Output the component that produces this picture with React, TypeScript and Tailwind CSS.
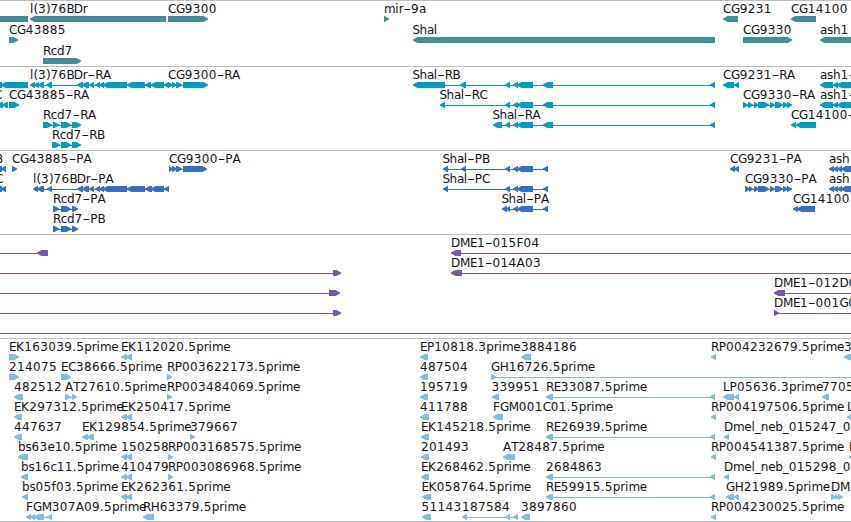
import React from "react";

type Span = [number, number];
type Feature = {
  label?: string;
  x: number;
  dir: "l" | "r";
  segs: Span[];
  line?: Span;
};
type Track = { name: string; color: string; pitch: number; height: number; rows: Feature[][] };

const f = (label: string, x: number, dir: "l" | "r", segs: Span[], line?: Span): Feature => ({
  label,
  x,
  dir,
  segs,
  line,
});

const shalTail: Span[] = [[505, 510], [513, 518], [517, 533], [543, 553], [710, 715]];
const shalCds: Span[] = [[505, 510], [513, 518], [517, 533], [543, 548]];
const pair: Span[] = [[121, 127], [126, 132]];

const genes: Track = {
  name: "Genes",
  color: "#3f8f94",
  pitch: 21,
  height: 66,
  rows: [
    [
      f("", -10, "l", [[-10, 28]]),
      f("l(3)76BDr", 30, "l", [[30, 166]]),
      f("CG9300", 168, "r", [[168, 208]]),
      f("mir-9a", 384, "r", [[384, 389]]),
      f("CG9231", 723, "l", [[723, 738]]),
      f("CG14100", 791, "l", [[791, 816]]),
    ],
    [
      f("CG43885", 9, "r", [[9, 18]]),
      f("Shal", 412.5, "l", [[413, 715]]),
      f("CG9330", 743, "r", [[743, 792]]),
      f("ash1", 820, "l", [[820, 860]]),
    ],
    [f("Rcd7", 43, "r", [[43, 81]])],
  ],
};

const transcripts: Track = {
  name: "Transcripts",
  color: "#009ebf",
  pitch: 20,
  height: 84,
  rows: [
    [
      f("", -6, "l", [[-6, 2], [1, 28]]),
      f("l(3)76BDr-RA", 30, "l", [[30, 35], [34, 39], [38, 44], [46, 52], [77, 83], [82, 89], [89, 94], [95, 100], [99, 104], [103, 127], [127, 145], [145, 151], [151, 164], [164, 169]]),
      f("CG9300-RA", 168, "r", [[168, 173], [172, 177], [176, 182], [183, 208]]),
      f("Shal-RB", 412.5, "l", [[413, 445], [460, 466], ...shalTail]),
      f("CG9231-RA", 723, "l", [[723, 734], [734, 739]]),
      f("ash1-", 820, "l", [[820, 833], [833, 838], [837, 860]]),
    ],
    [
      f("C", -6, "l", [[-3, 3], [2, 8]]),
      f("CG43885-RA", 9, "r", [[9, 19]]),
      f("Shal-RC", 439.5, "l", [[440, 445], ...shalTail]),
      f("CG9330-RA", 743, "r", [[743, 748], [748, 753], [754, 759], [758, 769], [770, 775], [775, 783], [783, 788], [787, 792]]),
      f("ash1-", 820, "l", [[820, 833], [833, 838], [837, 860]]),
    ],
    [
      f("Rcd7-RA", 43, "r", [[43, 52], [53, 59], [61, 71], [72, 81]]),
      f("Shal-RA", 492.5, "l", [[493, 502], ...shalTail]),
      f("CG14100-", 791, "l", [[791, 796], [796, 816]]),
    ],
    [f("Rcd7-RB", 52, "r", [[52, 60], [61, 71], [72, 81]])],
  ],
};

const proteins: Track = {
  name: "Proteins",
  color: "#336fcc",
  pitch: 20,
  height: 84,
  rows: [
    [
      f("B", -5, "l", [[-4, 2], [1, 6]]),
      f("CG43885-PA", 12, "r", [[12, 17]]),
      f("CG9300-PA", 169, "r", [[169, 173], [172, 177], [176, 182], [183, 207]]),
      f("Shal-PB", 442.5, "l", [[443, 448], [461, 466], ...shalCds]),
      f("CG9231-PA", 730, "l", [[730, 735], [734, 739]]),
      f("ash", 829, "l", [[829, 834], [833, 838], [837, 842], [841, 860]]),
    ],
    [
      f("C", -5, "l", [[-4, 2], [1, 6]]),
      f("l(3)76BDr-PA", 33, "l", [[33, 38], [37, 44], [47, 52], [77, 83], [82, 89], [89, 94], [95, 100], [99, 104], [103, 127], [127, 145], [145, 152], [151, 164], [164, 169]]),
      f("Shal-PC", 442.5, "l", [[443, 448], ...shalCds]),
      f("CG9330-PA", 745, "r", [[745, 750], [749, 753], [754, 759], [758, 769], [770, 775], [775, 783], [783, 788], [787, 792]]),
      f("ash", 829, "l", [[829, 834], [833, 838], [837, 842], [841, 860]]),
    ],
    [
      f("Rcd7-PA", 53, "r", [[53, 59], [61, 71], [72, 78]]),
      f("Shal-PA", 501.5, "l", [[502, 507], [506, 510], ...shalCds.slice(1)]),
      f("CG14100", 793, "l", [[793, 798], [797, 815]]),
    ],
    [f("Rcd7-PB", 53, "r", [[53, 59], [61, 71], [72, 78]])],
  ],
};

const clones: Track = {
  name: "Clones",
  color: "#7659a9",
  pitch: 20,
  height: 104,
  rows: [
    [f("", 0, "l", [[37, 48]], [0, 48]), f("DME1-015F04", 451, "l", [[451, 461]], [451, 851])],
    [f("", 0, "r", [[333, 341]], [0, 341]), f("DME1-014A03", 451, "l", [[451, 462]], [451, 851])],
    [f("", 0, "r", [[329, 340]], [0, 340]), f("DME1-012D0", 774, "l", [[774, 785]], [774, 851])],
    [f("", 0, "r", [[333, 341]], [0, 341]), f("DME1-001G0", 774, "r", [[774, 779]], [774, 851])],
    [f("", 0, "l", [], [0, 851])],
  ],
};

const ests: Track = {
  name: "ESTs",
  color: "#85bbdd",
  pitch: 20,
  height: 184,
  rows: [
    [
      f("EK163039.5prime", 9, "r", [[9, 19]]),
      f("EK112020.5prime", 121, "l", pair),
      f("EP10818.3prime", 420, "l", [[420, 428]]),
      f("3884186", 521, "l", [[521, 531]]),
      f("RP004232679.5prime", 711, "l", [[711, 716]]),
      f("3", 844, "l", [[844, 860]]),
    ],
    [
      f("214075", 9, "r", [[9, 19]]),
      f("EC38666.5prime", 61, "r", [[61, 71]]),
      f("RP003622173.5prime", 167, "r", [[167, 172]]),
      f("487504", 420, "l", [[420, 428]]),
      f("GH16726.5prime", 491, "r", [[491, 496]], [491, 851]),
    ],
    [
      f("482512", 14, "l", [[14, 23]]),
      f("AT27610.5prime", 65, "r", [[65, 71], [72, 77]]),
      f("RP003484069.5prime", 167, "r", [[167, 172]]),
      f("195719", 420, "l", [[420, 428]]),
      f("339951", 491.5, "l", [[492, 499]]),
      f("RE33087.5prime", 546, "l", [[546, 553], [710, 715]]),
      f("LP05636.3prime", 723, "l", [[723, 734], [734, 739]]),
      f("7705", 822, "l", [[822, 829]]),
    ],
    [
      f("EK297312.5prime", 14, "l", [[14, 22]]),
      f("EK250417.5prime", 121, "l", pair),
      f("411788", 420, "l", [[420, 429]]),
      f("FGM001C01.5prime", 493, "l", [[493, 503]]),
      f("RP004197506.5prime", 711, "l", [[711, 716]]),
      f("L", 847, "l", [[847, 860]]),
    ],
    [
      f("447637", 14, "l", [[14, 22]]),
      f("EK129854.5prime", 82, "l", [[82, 88], [87, 94]]),
      f("379667", 190, "r", [[190, 195]]),
      f("EK145218.5prime", 421, "l", [[421, 429]]),
      f("RE26939.5prime", 546, "l", [[546, 553], [710, 715]]),
      f("Dmel_neb_015247_0", 724, "l", [[724, 729]]),
    ],
    [
      f("bs63e10.5prime", 18, "l", [[18, 28]]),
      f("150258", 121, "l", pair),
      f("RP003168575.5prime", 168, "r", [[168, 173]]),
      f("201493", 421, "l", [[421, 429]]),
      f("AT28487.5prime", 503, "l", [[503, 515]]),
      f("RP004541387.5prime", 711, "l", [[711, 716]]),
      f("L", 849, "l", [[849, 860]]),
    ],
    [
      f("bs16c11.5prime", 21, "l", [[21, 28]]),
      f("410479", 121, "l", pair),
      f("RP003086968.5prime", 168, "r", [[168, 173]]),
      f("EK268462.5prime", 421, "l", [[421, 429]]),
      f("2684863", 546, "l", [[546, 553], [710, 715]]),
      f("Dmel_neb_015298_0", 724, "l", [[724, 729]]),
    ],
    [
      f("bs05f03.5prime", 22, "l", [[22, 28]]),
      f("EK262361.5prime", 121, "l", pair),
      f("EK058764.5prime", 421.5, "l", [[422, 431]]),
      f("RE59915.5prime", 546, "l", [[546, 553], [710, 715]]),
      f("GH21989.5prime", 726, "l", [[726, 734], [734, 739]]),
      f("DM", 831, "r", [[831, 836], [835, 839], [838, 843]]),
    ],
    [
      f("FGM307A09.5prime", 26, "l", [[26, 31], [30, 35], [34, 44], [47, 52]]),
      f("RH63379.5prime", 143, "l", [[143, 154]]),
      f("51143", 421.5, "l", [[422, 431]]),
      f("187584", 462, "l", [[462, 467], [505, 510], [513, 518]]),
      f("3897860", 521, "l", [[521, 530]]),
      f("RP004230025.5prime", 711, "l", [[711, 716]]),
    ],
  ],
};

// Label advances in pixels; anything not listed is a digit-width character.
const ADVANCE: Record<string, number> = {
  A: 8.3, B: 7.4, C: 8, D: 9, E: 7, F: 7, G: 8.7, H: 9, K: 8.3, L: 6.6, M: 10, P: 7.3, R: 7.8, S: 7, T: 7,
  a: 6.9, b: 7.5, c: 6.2, d: 7.6, e: 7.1, f: 4.3, h: 7.4, i: 3.4, l: 3.4, m: 11.3, n: 7.4, p: 7.5, r: 4.8, s: 6.1,
  "(": 4.5, ")": 4.5, ".": 4, _: 6, "-": 7.6,
};
const advance = (c: string) => ADVANCE[c] ?? 8;

function Label({ text, x, y }: { text: string; x: number; y: number }) {
  const xs: number[] = [];
  let pen = x;
  for (const c of text) {
    xs.push(Math.round(pen * 10) / 10);
    pen += advance(c);
  }
  const dash = text.indexOf("-");
  return (
    <text y={y} className="fill-[#141414] text-[12px]">
      {dash < 0 ? (
        <tspan x={xs.join(" ")}>{text}</tspan>
      ) : (
        <>
          <tspan x={xs.slice(0, dash).join(" ")}>{text.slice(0, dash)}</tspan>
          <tspan x={xs[dash]} textLength={7.6} lengthAdjust="spacingAndGlyphs">
            -
          </tspan>
          {dash < text.length - 1 && (
            <tspan x={xs.slice(dash + 1).join(" ")}>{text.slice(dash + 1)}</tspan>
          )}
        </>
      )}
    </text>
  );
}

// Six-pixel-high block ending in a short, blunt arrow head.
function arrow([a, b]: Span, dir: "l" | "r", y: number) {
  const head = Math.min(4.5, b - a);
  const tip = dir === "l" ? a : b;
  const neck = dir === "l" ? a + head : b - head;
  const back = dir === "l" ? b : a;
  return `M${tip} ${y + 2.4}L${neck} ${y}H${back}V${y + 6}H${neck}L${tip} ${y + 3.6}Z`;
}

function Glyph({ feature, y }: { feature: Feature; y: number }) {
  const { label, x, dir, segs, line } = feature;
  const span: Span = line ?? [segs[0][0] + 1, segs[segs.length - 1][1] - 1];
  return (
    <g>
      <rect x={span[0]} y={y + 18} width={span[1] - span[0]} height={1} />
      {segs.map((s, i) => (
        <path key={i} d={arrow(s, dir, y + 15)} />
      ))}
      {label && <Label text={label} x={x} y={y + 12} />}
    </g>
  );
}

function TrackPanel({ track }: { track: Track }) {
  return (
    <section aria-label={track.name} className="border-t border-[#bfbfbf]">
      <svg width={851} height={track.height - 1} fill={track.color} className="block">
        {track.rows.map((row, r) =>
          row.map((feature, i) => <Glyph key={`${r}-${i}`} feature={feature} y={r * track.pitch} />),
        )}
      </svg>
    </section>
  );
}

export default function App() {
  return (
    <main className="flex h-[522px] w-[851px] flex-col overflow-hidden border-b border-[#bfbfbf] bg-white font-['DejaVu_Sans',sans-serif]">
      {[genes, transcripts, proteins, clones, ests].map((track) => (
        <TrackPanel key={track.name} track={track} />
      ))}
    </main>
  );
}
